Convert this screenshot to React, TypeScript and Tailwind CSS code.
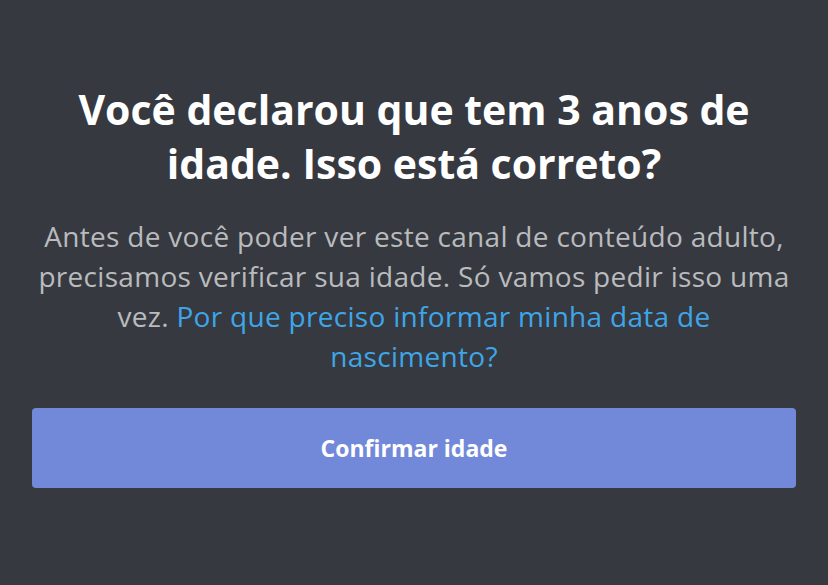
export default function App() {
  return (
    <div
      className="flex min-h-[585px] w-full flex-col items-center bg-[#36393f] px-8 pt-[82px]"
      style={{ fontFamily: '"Open Sans", "Noto Sans", sans-serif' }}
    >
      <h1 className="text-center text-[41px] font-bold leading-[54px] text-white">
        Você declarou que tem 3 anos de idade. Isso está correto?
      </h1>
      <p className="mt-[26px] text-center text-[28px] leading-[40px] tracking-[0.3px] text-[#b9bbbe]">
        Antes de você poder ver este canal de conteúdo adulto, precisamos verificar sua idade.
        Só vamos pedir isso uma vez.{" "}
        <a href="#" className="text-[#3ea6e8]">
          Por que preciso informar minha data de nascimento?
        </a>
      </p>
      <button
        type="button"
        className="mt-[32px] flex h-20 w-full items-center justify-center rounded-[4px] bg-[#7289da] text-[23px] font-bold text-white"
      >
        Confirmar idade
      </button>
    </div>
  );
}
